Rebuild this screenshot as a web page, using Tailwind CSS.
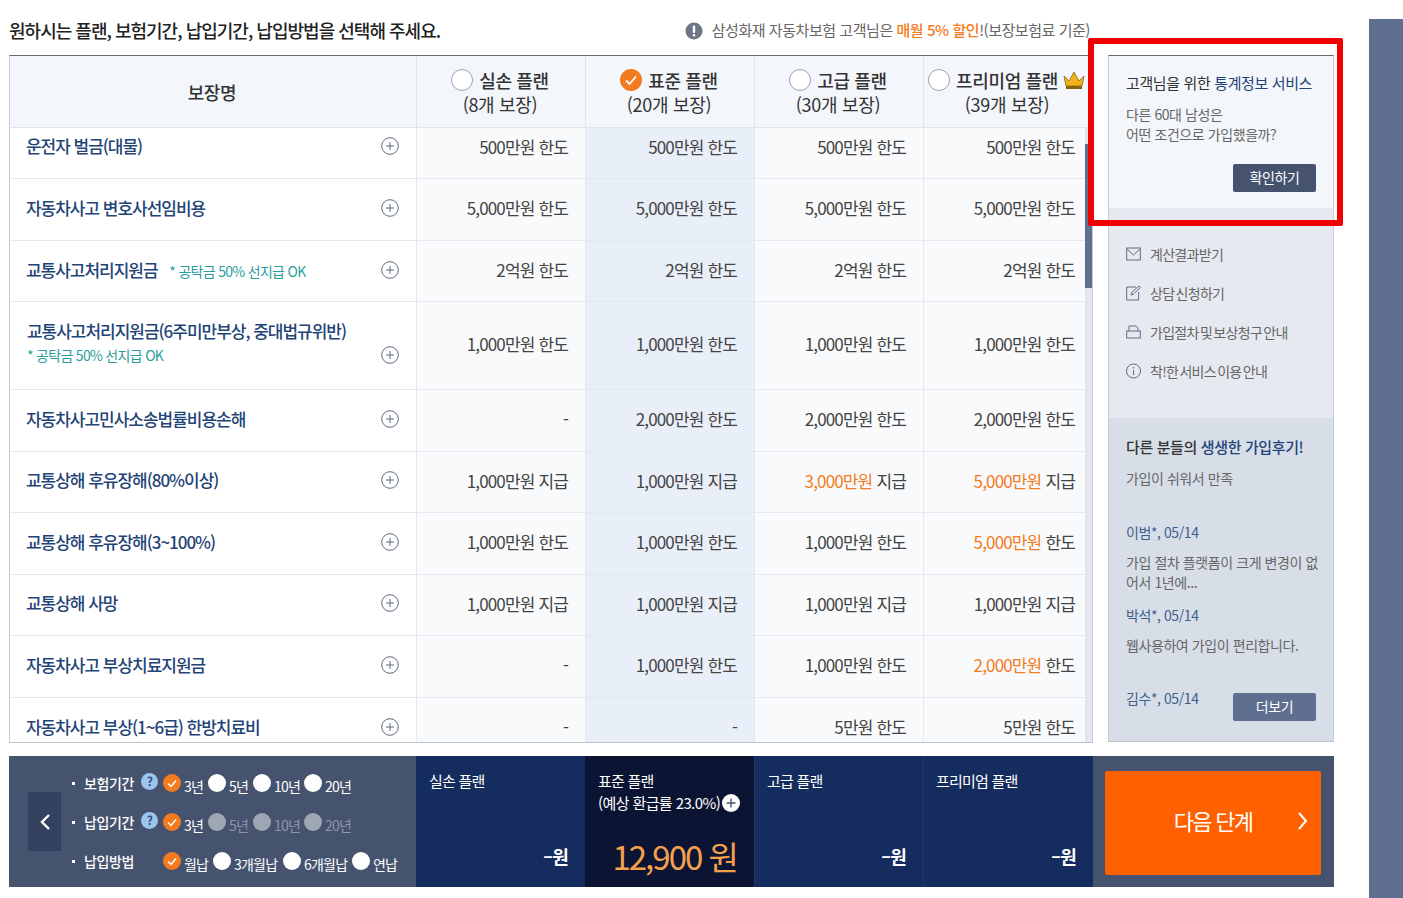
<!DOCTYPE html>
<html lang="ko">
<head>
    <meta charset="UTF-8">
    <title>보장 플랜 선택</title>
    <script src="https://cdn.jsdelivr.net/npm/@tailwindcss/browser@4"></script>
</head>
<body class="bg-white font-['Noto_Sans_CJK_KR','Noto_Sans',sans-serif] tracking-[-0.05em] text-[#444]">
<div class="relative flex h-[898px] w-[1403px] overflow-hidden">
    <div class="w-[1369px] pl-[9px]">
        <!-- title row -->
        <div class="flex h-[55px] w-[1084px] items-center justify-between pr-[3px] pt-[6px]">
            <h1 class="text-[18px] font-medium tracking-[-0.055em] text-[#222]">원하시는 플랜, 보험기간, 납입기간, 납입방법을 선택해 주세요.</h1>
            <p class="flex items-center gap-[9px] text-[15px] tracking-[-0.03em] text-[#666]">
                <svg class="h-[18px] w-[18px]" viewBox="0 0 18 18"><circle cx="9" cy="9" r="8.5" fill="#6d7686"/><rect x="7.8" y="3.5" width="2.4" height="7.5" rx="1" fill="#fff"/><circle cx="9" cy="13.2" r="1.3" fill="#fff"/></svg>
                <span>삼성화재 자동차보험 고객님은 <b class="font-medium text-[#f47a20]">매월 5% 할인</b>!(보장보험료 기준)</span>
            </p>
        </div>

        <div class="flex w-[1325px] justify-between">
            <!-- coverage table -->
            <div class="relative h-[688px] w-[1084px] overflow-hidden border border-t-[#666] border-r-[#c5ccd6] border-b-[#b9c1cc] border-l-[#c5ccd6]">
                <div class="flex h-[72px] border-b border-[#e1e5ea] bg-[#f3f6fa] tracking-[-0.02em] text-[#333]">
                    <div class="flex w-[406px] items-center justify-center pr-[2px] pt-[2px] text-[18px] font-medium">보장명</div>
                    <div class="flex w-[169px] flex-col items-center border-l border-[#e1e5ea] pr-[2px] pt-[12px]">
                        <div class="flex h-[24px] items-center gap-[6px] text-[18px] font-medium"><span class="h-[22px] w-[22px] rounded-full border border-[#9aa3b0] bg-white"></span>실손 플랜</div>
                        <div class="text-[18px] leading-[24px]">(8개 보장)</div>
                    </div>
                    <div class="flex w-[169px] flex-col items-center border-l border-[#e1e5ea] pr-[2px] pt-[12px]">
                        <div class="flex h-[24px] items-center gap-[6px] text-[18px] font-medium">
                            <svg class="h-[22px] w-[22px]" viewBox="0 0 22 22"><circle cx="11" cy="11" r="11" fill="#f47a20"/><path d="M6 11.5l3.5 3.5 6.5-7.5" fill="none" stroke="#fff" stroke-width="1.8"/></svg>표준 플랜</div>
                        <div class="text-[18px] leading-[24px]">(20개 보장)</div>
                    </div>
                    <div class="flex w-[169px] flex-col items-center border-l border-[#e1e5ea] pr-[2px] pt-[12px]">
                        <div class="flex h-[24px] items-center gap-[6px] text-[18px] font-medium"><span class="h-[22px] w-[22px] rounded-full border border-[#9aa3b0] bg-white"></span>고급 플랜</div>
                        <div class="text-[18px] leading-[24px]">(30개 보장)</div>
                    </div>
                    <div class="flex w-[169px] flex-col items-center border-l border-[#e1e5ea] pr-[2px] pt-[12px]">
                        <div class="flex h-[24px] items-center gap-[6px] whitespace-nowrap text-[18px] font-medium"><span class="h-[22px] w-[22px] rounded-full border border-[#9aa3b0] bg-white"></span>프리미엄 플랜
                            <svg class="-ml-[2px] h-[20px] w-[24px]" viewBox="0 0 24 20"><path d="M2 6l5 5 5-9 5 9 5-5-2 10H4z" fill="#f2b21b" stroke="#8a6510" stroke-width="0.8"/><rect x="4" y="16" width="16" height="3" fill="#8a6510"/></svg></div>
                        <div class="text-[18px] leading-[24px]">(39개 보장)</div>
                    </div>
                </div>

                <div class="h-[614px] overflow-hidden text-[17px] tracking-[-0.05em]">
                    <!-- row 1 sits partly scrolled -->
                    <div class="-mt-[10px] flex h-[61px] border-b border-[#e5e8ec]">
                        <div class="flex w-[406px] items-center justify-between pb-[4px] pl-[16px] pr-[17px]"><span class="font-medium tracking-[-0.06em] text-[#1f4478]">운전자 벌금(대물)</span>
                            <svg class="h-[18px] w-[18px]" viewBox="0 0 18 18"><circle cx="9" cy="9" r="8.3" fill="none" stroke="#5f6b80"/><path d="M9 5v8M5 9h8" stroke="#5f6b80"/></svg></div>
                        <div class="flex w-[169px] items-center justify-end border-l border-[#e5e8ec] bg-[#f8fafc] pb-[3px] pr-[17px]">500만원 한도</div>
                        <div class="flex w-[169px] items-center justify-end border-l border-[#e5e8ec] bg-[#e9eff8] pb-[3px] pr-[17px]">500만원 한도</div>
                        <div class="flex w-[169px] items-center justify-end border-l border-[#e5e8ec] bg-[#f8fafc] pb-[3px] pr-[17px]">500만원 한도</div>
                        <div class="flex w-[169px] items-center justify-end border-l border-[#e5e8ec] bg-[#f8fafc] pb-[3px] pr-[17px]">500만원 한도</div>
                    </div>
                    <div class="flex h-[62px] border-b border-[#e5e8ec]">
                        <div class="flex w-[406px] items-center justify-between pb-[4px] pl-[16px] pr-[17px]"><span class="font-medium tracking-[-0.06em] text-[#1f4478]">자동차사고 변호사선임비용</span>
                            <svg class="h-[18px] w-[18px]" viewBox="0 0 18 18"><circle cx="9" cy="9" r="8.3" fill="none" stroke="#5f6b80"/><path d="M9 5v8M5 9h8" stroke="#5f6b80"/></svg></div>
                        <div class="flex w-[169px] items-center justify-end border-l border-[#e5e8ec] bg-[#f8fafc] pb-[3px] pr-[17px]">5,000만원 한도</div>
                        <div class="flex w-[169px] items-center justify-end border-l border-[#e5e8ec] bg-[#e9eff8] pb-[3px] pr-[17px]">5,000만원 한도</div>
                        <div class="flex w-[169px] items-center justify-end border-l border-[#e5e8ec] bg-[#f8fafc] pb-[3px] pr-[17px]">5,000만원 한도</div>
                        <div class="flex w-[169px] items-center justify-end border-l border-[#e5e8ec] bg-[#f8fafc] pb-[3px] pr-[17px]">5,000만원 한도</div>
                    </div>
                    <div class="flex h-[61px] border-b border-[#e5e8ec]">
                        <div class="flex w-[406px] items-center justify-between pb-[3px] pl-[16px] pr-[17px]"><span class="font-medium tracking-[-0.06em] text-[#1f4478]">교통사고처리지원금 <span class="ml-[8px] text-[14px] font-normal tracking-[-0.05em] text-[#2a9d9a]">* 공탁금 50% 선지급 OK</span></span>
                            <svg class="h-[18px] w-[18px]" viewBox="0 0 18 18"><circle cx="9" cy="9" r="8.3" fill="none" stroke="#5f6b80"/><path d="M9 5v8M5 9h8" stroke="#5f6b80"/></svg></div>
                        <div class="flex w-[169px] items-center justify-end border-l border-[#e5e8ec] bg-[#f8fafc] pb-[3px] pr-[17px]">2억원 한도</div>
                        <div class="flex w-[169px] items-center justify-end border-l border-[#e5e8ec] bg-[#e9eff8] pb-[3px] pr-[17px]">2억원 한도</div>
                        <div class="flex w-[169px] items-center justify-end border-l border-[#e5e8ec] bg-[#f8fafc] pb-[3px] pr-[17px]">2억원 한도</div>
                        <div class="flex w-[169px] items-center justify-end border-l border-[#e5e8ec] bg-[#f8fafc] pb-[3px] pr-[17px]">2억원 한도</div>
                    </div>
                    <div class="flex h-[88px] border-b border-[#e5e8ec]">
                        <div class="flex w-[406px] items-end justify-between pb-[22px] pl-[17px] pr-[17px]"><span class="text-[#1f4478]"><span class="block font-medium tracking-[-0.06em]">교통사고처리지원금(6주미만부상, 중대법규위반)</span><span class="block text-[14px] leading-[24px] tracking-[-0.05em] text-[#2a9d9a]">* 공탁금 50% 선지급 OK</span></span>
                            <svg class="mb-[3px] h-[18px] w-[18px]" viewBox="0 0 18 18"><circle cx="9" cy="9" r="8.3" fill="none" stroke="#5f6b80"/><path d="M9 5v8M5 9h8" stroke="#5f6b80"/></svg></div>
                        <div class="flex w-[169px] items-center justify-end border-l border-[#e5e8ec] bg-[#f8fafc] pb-[3px] pr-[17px]">1,000만원 한도</div>
                        <div class="flex w-[169px] items-center justify-end border-l border-[#e5e8ec] bg-[#e9eff8] pb-[3px] pr-[17px]">1,000만원 한도</div>
                        <div class="flex w-[169px] items-center justify-end border-l border-[#e5e8ec] bg-[#f8fafc] pb-[3px] pr-[17px]">1,000만원 한도</div>
                        <div class="flex w-[169px] items-center justify-end border-l border-[#e5e8ec] bg-[#f8fafc] pb-[3px] pr-[17px]">1,000만원 한도</div>
                    </div>
                    <div class="flex h-[62px] border-b border-[#e5e8ec]">
                        <div class="flex w-[406px] items-center justify-between pb-[4px] pl-[16px] pr-[17px]"><span class="font-medium tracking-[-0.06em] text-[#1f4478]">자동차사고민사소송법률비용손해</span>
                            <svg class="h-[18px] w-[18px]" viewBox="0 0 18 18"><circle cx="9" cy="9" r="8.3" fill="none" stroke="#5f6b80"/><path d="M9 5v8M5 9h8" stroke="#5f6b80"/></svg></div>
                        <div class="flex w-[169px] items-center justify-end border-l border-[#e5e8ec] bg-[#f8fafc] pb-[3px] pr-[17px]">-</div>
                        <div class="flex w-[169px] items-center justify-end border-l border-[#e5e8ec] bg-[#e9eff8] pb-[3px] pr-[17px]">2,000만원 한도</div>
                        <div class="flex w-[169px] items-center justify-end border-l border-[#e5e8ec] bg-[#f8fafc] pb-[3px] pr-[17px]">2,000만원 한도</div>
                        <div class="flex w-[169px] items-center justify-end border-l border-[#e5e8ec] bg-[#f8fafc] pb-[3px] pr-[17px]">2,000만원 한도</div>
                    </div>
                    <div class="flex h-[61px] border-b border-[#e5e8ec]">
                        <div class="flex w-[406px] items-center justify-between pb-[4px] pl-[16px] pr-[17px]"><span class="font-medium tracking-[-0.06em] text-[#1f4478]">교통상해 후유장해(80%이상)</span>
                            <svg class="h-[18px] w-[18px]" viewBox="0 0 18 18"><circle cx="9" cy="9" r="8.3" fill="none" stroke="#5f6b80"/><path d="M9 5v8M5 9h8" stroke="#5f6b80"/></svg></div>
                        <div class="flex w-[169px] items-center justify-end border-l border-[#e5e8ec] bg-[#f8fafc] pb-[3px] pr-[17px]">1,000만원 지급</div>
                        <div class="flex w-[169px] items-center justify-end border-l border-[#e5e8ec] bg-[#e9eff8] pb-[3px] pr-[17px]">1,000만원 지급</div>
                        <div class="flex w-[169px] items-center justify-end gap-[4px] border-l border-[#e5e8ec] bg-[#f8fafc] pb-[3px] pr-[17px]"><span class="text-[#f47a20]">3,000만원</span> 지급</div>
                        <div class="flex w-[169px] items-center justify-end gap-[4px] border-l border-[#e5e8ec] bg-[#f8fafc] pb-[3px] pr-[17px]"><span class="text-[#f47a20]">5,000만원</span> 지급</div>
                    </div>
                    <div class="flex h-[62px] border-b border-[#e5e8ec]">
                        <div class="flex w-[406px] items-center justify-between pb-[4px] pl-[16px] pr-[17px]"><span class="font-medium tracking-[-0.06em] text-[#1f4478]">교통상해 후유장해(3~100%)</span>
                            <svg class="h-[18px] w-[18px]" viewBox="0 0 18 18"><circle cx="9" cy="9" r="8.3" fill="none" stroke="#5f6b80"/><path d="M9 5v8M5 9h8" stroke="#5f6b80"/></svg></div>
                        <div class="flex w-[169px] items-center justify-end border-l border-[#e5e8ec] bg-[#f8fafc] pb-[3px] pr-[17px]">1,000만원 한도</div>
                        <div class="flex w-[169px] items-center justify-end border-l border-[#e5e8ec] bg-[#e9eff8] pb-[3px] pr-[17px]">1,000만원 한도</div>
                        <div class="flex w-[169px] items-center justify-end border-l border-[#e5e8ec] bg-[#f8fafc] pb-[3px] pr-[17px]">1,000만원 한도</div>
                        <div class="flex w-[169px] items-center justify-end gap-[4px] border-l border-[#e5e8ec] bg-[#f8fafc] pb-[3px] pr-[17px]"><span class="text-[#f47a20]">5,000만원</span> 한도</div>
                    </div>
                    <div class="flex h-[61px] border-b border-[#e5e8ec]">
                        <div class="flex w-[406px] items-center justify-between pb-[4px] pl-[16px] pr-[17px]"><span class="font-medium tracking-[-0.06em] text-[#1f4478]">교통상해 사망</span>
                            <svg class="h-[18px] w-[18px]" viewBox="0 0 18 18"><circle cx="9" cy="9" r="8.3" fill="none" stroke="#5f6b80"/><path d="M9 5v8M5 9h8" stroke="#5f6b80"/></svg></div>
                        <div class="flex w-[169px] items-center justify-end border-l border-[#e5e8ec] bg-[#f8fafc] pb-[3px] pr-[17px]">1,000만원 지급</div>
                        <div class="flex w-[169px] items-center justify-end border-l border-[#e5e8ec] bg-[#e9eff8] pb-[3px] pr-[17px]">1,000만원 지급</div>
                        <div class="flex w-[169px] items-center justify-end border-l border-[#e5e8ec] bg-[#f8fafc] pb-[3px] pr-[17px]">1,000만원 지급</div>
                        <div class="flex w-[169px] items-center justify-end border-l border-[#e5e8ec] bg-[#f8fafc] pb-[3px] pr-[17px]">1,000만원 지급</div>
                    </div>
                    <div class="flex h-[62px] border-b border-[#e5e8ec]">
                        <div class="flex w-[406px] items-center justify-between pb-[4px] pl-[16px] pr-[17px]"><span class="font-medium tracking-[-0.06em] text-[#1f4478]">자동차사고 부상치료지원금</span>
                            <svg class="h-[18px] w-[18px]" viewBox="0 0 18 18"><circle cx="9" cy="9" r="8.3" fill="none" stroke="#5f6b80"/><path d="M9 5v8M5 9h8" stroke="#5f6b80"/></svg></div>
                        <div class="flex w-[169px] items-center justify-end border-l border-[#e5e8ec] bg-[#f8fafc] pb-[3px] pr-[17px]">-</div>
                        <div class="flex w-[169px] items-center justify-end border-l border-[#e5e8ec] bg-[#e9eff8] pb-[3px] pr-[17px]">1,000만원 한도</div>
                        <div class="flex w-[169px] items-center justify-end border-l border-[#e5e8ec] bg-[#f8fafc] pb-[3px] pr-[17px]">1,000만원 한도</div>
                        <div class="flex w-[169px] items-center justify-end gap-[4px] border-l border-[#e5e8ec] bg-[#f8fafc] pb-[3px] pr-[17px]"><span class="text-[#f47a20]">2,000만원</span> 한도</div>
                    </div>
                    <div class="flex h-[61px]">
                        <div class="flex w-[406px] items-center justify-between pb-[4px] pl-[16px] pr-[17px]"><span class="font-medium tracking-[-0.06em] text-[#1f4478]">자동차사고 부상(1~6급) 한방치료비</span>
                            <svg class="h-[18px] w-[18px]" viewBox="0 0 18 18"><circle cx="9" cy="9" r="8.3" fill="none" stroke="#5f6b80"/><path d="M9 5v8M5 9h8" stroke="#5f6b80"/></svg></div>
                        <div class="flex w-[169px] items-center justify-end border-l border-[#e5e8ec] bg-[#f8fafc] pb-[3px] pr-[17px]">-</div>
                        <div class="flex w-[169px] items-center justify-end border-l border-[#e5e8ec] bg-[#e9eff8] pb-[3px] pr-[17px]">-</div>
                        <div class="flex w-[169px] items-center justify-end border-l border-[#e5e8ec] bg-[#f8fafc] pb-[3px] pr-[17px]">5만원 한도</div>
                        <div class="flex w-[169px] items-center justify-end border-l border-[#e5e8ec] bg-[#f8fafc] pb-[3px] pr-[17px]">5만원 한도</div>
                    </div>
                </div>
                <!-- scrollbar -->
                <div class="absolute right-0 top-[72px] h-[614px] w-[7px] bg-[#e3e7ed]">
                    <div class="mt-[16px] h-[144px] w-full bg-[#5f6f8f]"></div>
                </div>
            </div>

            <!-- side panel -->
            <aside class="flex h-[687px] w-[226px] flex-col border border-t-[#666] border-r-[#c5ccd6] border-b-[#b9c1cc] border-l-[#c5ccd6] text-[14px] tracking-[-0.03em] text-[#666]">
                <div class="h-[152px] bg-[#f3f6fa] px-[17px] pt-[16px]">
                    <p class="text-[15px] tracking-[-0.025em] text-[#333]">고객님을 위한 <span class="text-[#1f4478]">통계정보 서비스</span></p>
                    <p class="mt-[9px] leading-[20px]">다른 60대 남성은<br>어떤 조건으로 가입했을까?</p>
                    <div class="mt-[20px] flex justify-end"><button class="h-[28px] w-[83px] rounded-[2px] bg-[#46536f] text-[14px] text-white">확인하기</button></div>
                </div>
                <ul class="flex h-[210px] flex-col gap-[19px] bg-[#e6eaf0] px-[17px] pt-[36px] tracking-[-0.05em] [word-spacing:-2px]">
                    <li class="flex h-[20px] items-center gap-[9px]">
                        <svg class="h-[16px] w-[15px]" viewBox="0 0 15 16" fill="none" stroke="#5f6b80"><rect x="0.7" y="2" width="13.6" height="12"/><path d="M1 3l6.5 6L14 3"/></svg>계산결과받기</li>
                    <li class="flex h-[20px] items-center gap-[9px]">
                        <svg class="h-[16px] w-[15px]" viewBox="0 0 15 16" fill="none" stroke="#5f6b80"><path d="M10 2H0.7v13h12V7"/><path d="M5 10l1-3 7-6 1.5 1.5-7 6.5z"/></svg>상담 신청하기</li>
                    <li class="flex h-[20px] items-center gap-[9px]">
                        <svg class="h-[16px] w-[15px]" viewBox="0 0 15 16" fill="none" stroke="#5f6b80"><rect x="0.7" y="7" width="13.6" height="7"/><path d="M3 7V2h7l2 2v3"/></svg>가입절차 및 보상청구 안내</li>
                    <li class="flex h-[20px] items-center gap-[9px]">
                        <svg class="h-[16px] w-[15px]" viewBox="0 0 15 16" fill="none" stroke="#5f6b80"><circle cx="7.5" cy="8" r="7"/><path d="M7.5 7v5M7.5 4v1.5"/></svg>착!한 서비스 이용 안내</li>
                </ul>
                <div class="relative flex-1 bg-[#d7dee8] px-[17px] pt-[18px]">
                    <p class="text-[15px] font-medium tracking-[-0.025em] text-[#333]">다른 분들의 <span class="text-[#1f4478]">생생한 가입후기!</span></p>
                    <p class="mt-[9px] leading-[20px]">가입이 쉬워서 만족</p>
                    <p class="mt-[34px] leading-[20px] text-[#3f5f8c]">이범*, 05/14</p>
                    <p class="-mr-[5px] mt-[10px] break-all leading-[20px]">가입 절차 플랫폼이 크게 변경이 없어서 1년에...</p>
                    <p class="mt-[13px] leading-[20px] text-[#3f5f8c]">박석*, 05/14</p>
                    <p class="mt-[10px] leading-[20px]">웹사용하여 가입이 편리합니다.</p>
                    <div class="mt-[33px] flex items-start justify-between">
                        <p class="leading-[20px] text-[#3f5f8c]">김수*, 05/14</p>
                        <button class="mt-[5px] h-[28px] w-[83px] rounded-[2px] bg-[#5f6f8f] text-[14px] text-white">더보기</button>
                    </div>
                </div>
            </aside>
        </div>

        <!-- bottom summary bar -->
        <div class="mt-[13px] flex h-[131px] w-[1325px] text-white">
            <div class="flex w-[407px] items-center bg-[#46536f] pl-[19px]">
                <button class="flex h-[59px] w-[33px] items-center justify-center bg-[#35425f]">
                    <svg class="h-[18px] w-[12px]" viewBox="0 0 12 18" fill="none" stroke="#fff" stroke-width="2.4"><path d="M10 2L3 9l7 7"/></svg>
                </button>
                <div class="ml-[11px] mt-[1px] flex flex-col gap-[15px] text-[14px]">
                    <div class="flex h-[24px] items-center">
                        <span class="mr-[9px] h-[3px] w-[3px] bg-white"></span><span class="w-[52px] font-medium tracking-[-0.03em]">보험기간</span>
                        <span class="flex h-[18px] w-[27px] items-start justify-center"><svg class="-mt-[1px] h-[17px] w-[17px]" viewBox="0 0 17 17"><circle cx="8.5" cy="8.5" r="8.5" fill="#9cc4ee"/><text x="8.5" y="13" text-anchor="middle" font-size="12" font-weight="700" fill="#35507a">?</text></svg></span>
                        <svg class="h-[18px] w-[18px]" viewBox="0 0 18 18"><circle cx="9" cy="9" r="9" fill="#f47a20"/><path d="M5 9.5l3 3 5-6" fill="none" stroke="#fff" stroke-width="1.5"/></svg>
                        <span class="ml-[3px] mt-[6px] w-[24px]">3년</span>
                        <span class="h-[18px] w-[18px] rounded-full bg-white"></span>
                        <span class="ml-[3px] mt-[6px] w-[24px]">5년</span>
                        <span class="h-[18px] w-[18px] rounded-full bg-white"></span>
                        <span class="ml-[3px] mt-[6px] w-[30px]">10년</span>
                        <span class="h-[18px] w-[18px] rounded-full bg-white"></span>
                        <span class="ml-[3px] mt-[6px]">20년</span>
                    </div>
                    <div class="flex h-[24px] items-center">
                        <span class="mr-[9px] h-[3px] w-[3px] bg-white"></span><span class="w-[52px] font-medium tracking-[-0.03em]">납입기간</span>
                        <span class="flex h-[18px] w-[27px] items-start justify-center"><svg class="-mt-[1px] h-[17px] w-[17px]" viewBox="0 0 17 17"><circle cx="8.5" cy="8.5" r="8.5" fill="#9cc4ee"/><text x="8.5" y="13" text-anchor="middle" font-size="12" font-weight="700" fill="#35507a">?</text></svg></span>
                        <svg class="h-[18px] w-[18px]" viewBox="0 0 18 18"><circle cx="9" cy="9" r="9" fill="#f47a20"/><path d="M5 9.5l3 3 5-6" fill="none" stroke="#fff" stroke-width="1.5"/></svg>
                        <span class="ml-[3px] mt-[6px] w-[24px]">3년</span>
                        <span class="h-[18px] w-[18px] rounded-full bg-[#9ea5b3]"></span>
                        <span class="ml-[3px] mt-[6px] w-[24px] text-[#8f97a8]">5년</span>
                        <span class="h-[18px] w-[18px] rounded-full bg-[#9ea5b3]"></span>
                        <span class="ml-[3px] mt-[6px] w-[30px] text-[#8f97a8]">10년</span>
                        <span class="h-[18px] w-[18px] rounded-full bg-[#9ea5b3]"></span>
                        <span class="ml-[3px] mt-[6px] text-[#8f97a8]">20년</span>
                    </div>
                    <div class="flex h-[24px] items-center">
                        <span class="mr-[9px] h-[3px] w-[3px] bg-white"></span><span class="w-[79px] font-medium tracking-[-0.03em]">납입방법</span>
                        <svg class="h-[18px] w-[18px]" viewBox="0 0 18 18"><circle cx="9" cy="9" r="9" fill="#f47a20"/><path d="M5 9.5l3 3 5-6" fill="none" stroke="#fff" stroke-width="1.5"/></svg>
                        <span class="ml-[3px] mt-[6px] w-[29px]">월납</span>
                        <span class="h-[18px] w-[18px] rounded-full bg-white"></span>
                        <span class="ml-[3px] mt-[6px] w-[49px]">3개월납</span>
                        <span class="h-[18px] w-[18px] rounded-full bg-white"></span>
                        <span class="ml-[3px] mt-[6px] w-[48px]">6개월납</span>
                        <span class="h-[18px] w-[18px] rounded-full bg-white"></span>
                        <span class="ml-[3px] mt-[6px]">연납</span>
                    </div>
                </div>
            </div>
            <div class="flex w-[169px] flex-col justify-between bg-[#152c5e] pb-[18px] pl-[13px] pr-[17px] pt-[14px] text-[15px]">
                <p>실손 플랜</p><p class="text-right text-[18px] font-bold leading-[26px]">–원</p>
            </div>
            <div class="flex w-[169px] flex-col justify-between bg-[#0b1433] pb-[9px] pl-[13px] pr-[17px] pt-[14px] text-[15px]">
                <div>
                    <p>표준 플랜</p>
                    <p class="-mt-[1px] flex items-center whitespace-nowrap tracking-[-0.04em]">(예상 환급률 23.0%)
                        <svg class="ml-[2px] h-[18px] w-[18px] shrink-0" viewBox="0 0 18 18"><circle cx="9" cy="9" r="9" fill="#fff"/><path d="M9 4.5v9M4.5 9h9" stroke="#46536f" stroke-width="1.4"/></svg></p>
                </div>
                <p class="text-right text-[33px] leading-[44px] tracking-[-0.06em] text-[#f5a04c]">12,900 원</p>
            </div>
            <div class="flex w-[169px] flex-col justify-between border-l border-[#24386a] bg-[#152c5e] pb-[18px] pl-[12px] pr-[17px] pt-[14px] text-[15px]">
                <p>고급 플랜</p><p class="text-right text-[18px] font-bold leading-[26px]">–원</p>
            </div>
            <div class="flex w-[170px] flex-col justify-between border-l border-[#24386a] bg-[#152c5e] pb-[18px] pl-[12px] pr-[17px] pt-[14px] text-[15px]">
                <p>프리미엄 플랜</p><p class="text-right text-[18px] font-bold leading-[26px]">–원</p>
            </div>
            <div class="flex flex-1 bg-[#46536f] pb-[12px] pl-[12px] pr-[13px] pt-[15px]">
                <button class="relative flex w-full items-center justify-center rounded-[2px] bg-[#ff6000] pb-[5px] text-[22px] tracking-[-0.08em] text-[#fff]">다음 단계
                    <svg class="absolute right-[13px] h-[18px] w-[11px]" viewBox="0 0 11 18" fill="none" stroke="#fff" stroke-width="2"><path d="M2 1l7 8-7 8"/></svg>
                </button>
            </div>
        </div>
    </div>

    <!-- right strip -->
    <div class="mt-[19px] w-[34px] bg-[#5f6f8f]"></div>

    <!-- annotation box drawn over the page -->
    <div class="absolute left-[1088px] top-[38px] h-[188px] w-[255px] rounded-[2px] border-[6px] border-[#f00000]"></div>
</div>
</body>
</html>
